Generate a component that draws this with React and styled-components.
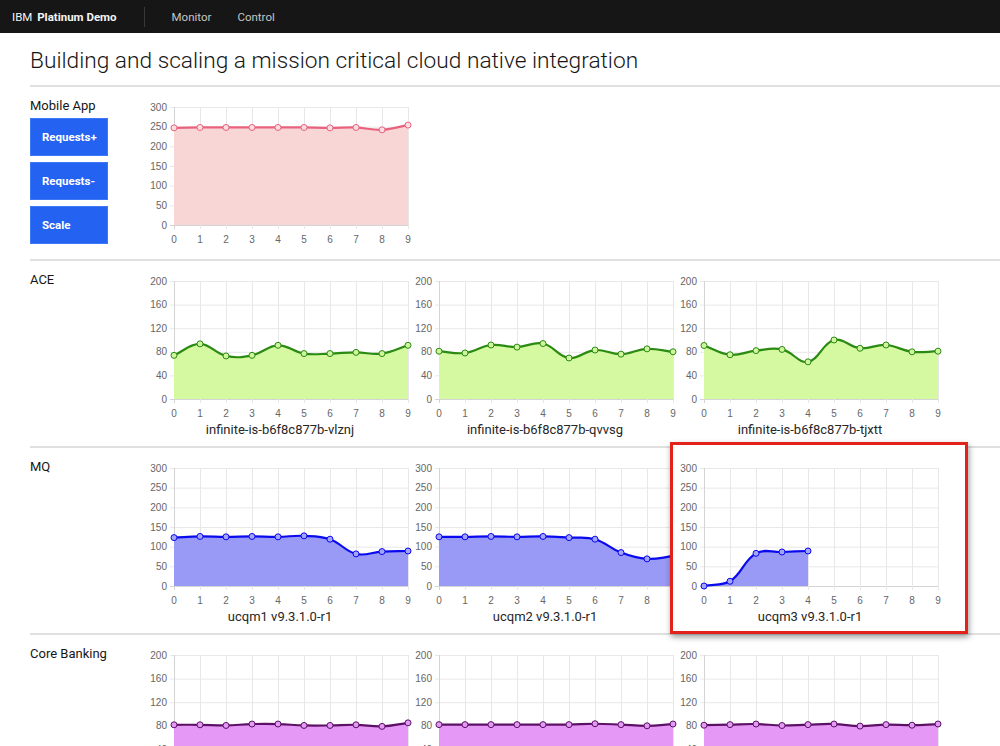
import React from 'react';
import styled, { createGlobalStyle } from 'styled-components';

const GlobalStyle = createGlobalStyle`
    html, body {
        margin: 0;
        padding: 0;
        background: #ffffff;
        overflow: hidden;
    }
    body {
        font-family: Roboto, 'Open Sans', sans-serif;
        color: #161616;
    }
`;

// chart geometry (all charts share it)
const CHART_W = 265;
const PLOT_LEFT = 31;
const PLOT_TOP = 6;
const PLOT_W = 234;
const PLOT_H = 118;
const CHART_H = 146;

const PALETTES = {
    pink: { line: '#e8627e', fill: '#f8d6d6', dot: '#fbdde2' },
    green: { line: '#2a8a12', fill: '#d4f9a0', dot: '#cff69c' },
    blue: { line: '#0a0aee', fill: '#9999f6', dot: '#a3a3f8' },
    purple: { line: '#5c1066', fill: '#e598f6', dot: '#e39af4' },
};

const sections = [
    {
        label: 'Mobile App',
        buttons: ['Requests+', 'Requests-', 'Scale'],
        charts: [
            { palette: 'pink', max: 300, step: 50, data: [247, 248, 248, 248, 248, 248, 247, 248, 242, 254] },
        ],
    },
    {
        label: 'ACE',
        charts: [
            { name: 'infinite-is-b6f8c877b-vlznj', palette: 'green', max: 200, step: 40, data: [74, 93.5, 73, 74, 91, 77, 77, 79, 77, 91] },
            { name: 'infinite-is-b6f8c877b-qvvsg', palette: 'green', max: 200, step: 40, data: [81, 78, 91.5, 88, 94, 69.5, 83, 76, 85, 80] },
            { name: 'infinite-is-b6f8c877b-tjxtt', palette: 'green', max: 200, step: 40, data: [90.7, 75, 82, 84, 63, 100, 86, 91.5, 80, 81] },
        ],
    },
    {
        label: 'MQ',
        charts: [
            { name: 'ucqm1 v9.3.1.0-r1', palette: 'blue', max: 300, step: 50, data: [123, 126, 125, 126, 125, 127.5, 119, 81.6, 87.5, 89] },
            { name: 'ucqm2 v9.3.1.0-r1', palette: 'blue', max: 300, step: 50, data: [125, 125, 126, 125, 126, 123, 119, 85, 69, 76] },
            { name: 'ucqm3 v9.3.1.0-r1', palette: 'blue', max: 300, step: 50, data: [0, 12, 83, 86.5, 89], highlighted: true },
        ],
    },
    {
        label: 'Core Banking',
        charts: [
            { palette: 'purple', max: 200, step: 40, data: [81.7, 81.7, 80.6, 83, 83, 80.6, 80.6, 81.7, 79, 85] },
            { palette: 'purple', max: 200, step: 40, data: [82, 82, 82, 82, 82, 82, 83.5, 82, 80, 83] },
            { palette: 'purple', max: 200, step: 40, data: [81, 82, 83, 80.5, 82, 83, 79.5, 82, 81, 83] },
        ],
    },
];

// Chart.js style cubic spline, tension 0.4
const splinePath = (pts, tension = 0.4) => {
    const clampY = (y) => Math.min(PLOT_TOP + PLOT_H, Math.max(PLOT_TOP, y));
    const cps = pts.map((p, i) => {
        const prev = pts[i - 1] || p;
        const next = pts[i + 1] || p;
        const d01 = Math.hypot(p.x - prev.x, p.y - prev.y);
        const d12 = Math.hypot(next.x - p.x, next.y - p.y);
        let s01 = d01 / (d01 + d12);
        let s12 = d12 / (d01 + d12);
        if (isNaN(s01)) s01 = 0;
        if (isNaN(s12)) s12 = 0;
        const fa = tension * s01;
        const fb = tension * s12;
        return {
            inX: p.x - fa * (next.x - prev.x),
            inY: clampY(p.y - fa * (next.y - prev.y)),
            outX: p.x + fb * (next.x - prev.x),
            outY: clampY(p.y + fb * (next.y - prev.y)),
        };
    });
    let d = `M${pts[0].x},${pts[0].y}`;
    for (let i = 1; i < pts.length; i++) {
        d += ` C${cps[i - 1].outX},${cps[i - 1].outY} ${cps[i].inX},${cps[i].inY} ${pts[i].x},${pts[i].y}`;
    }
    return d;
};

const LineChart = ({ data, max, step, palette }) => {
    const colors = PALETTES[palette];
    const bottom = PLOT_TOP + PLOT_H;
    const xAt = (i) => PLOT_LEFT + (i * PLOT_W) / 9;
    const yAt = (v) => bottom - (v / max) * PLOT_H;
    const ticks = [];
    for (let v = 0; v <= max; v += step) ticks.push(v);
    const pts = data.map((v, i) => ({ x: xAt(i), y: yAt(v) }));
    const line = splinePath(pts);
    const area = `${line} L${pts[pts.length - 1].x},${bottom} L${pts[0].x},${bottom} Z`;

    return (
        <ChartSvg width={CHART_W} height={CHART_H}>
            {ticks.map((v) => (
                <g key={`y${v}`}>
                    <line x1={PLOT_LEFT - 4} x2={PLOT_LEFT + PLOT_W} y1={yAt(v) + 0.5} y2={yAt(v) + 0.5} stroke={v === 0 ? '#d4d4d4' : '#e8e8e8'} />
                    <TickLabel x={PLOT_LEFT - 7} y={yAt(v)} textAnchor="end" dominantBaseline="central">{v}</TickLabel>
                </g>
            ))}
            {Array.from({ length: 10 }, (_, i) => (
                <g key={`x${i}`}>
                    <line x1={xAt(i) + 0.5} x2={xAt(i) + 0.5} y1={PLOT_TOP} y2={bottom + 4} stroke={i === 0 ? '#d4d4d4' : '#e8e8e8'} />
                    <TickLabel x={xAt(i)} y={bottom + 14} textAnchor="middle" dominantBaseline="central">{i}</TickLabel>
                </g>
            ))}
            <path d={area} fill={colors.fill} />
            <path d={line} fill="none" stroke={colors.line} strokeWidth="2.2" />
            {pts.map((p, i) => (
                <circle key={i} cx={p.x} cy={p.y} r="3" fill={colors.dot} stroke={colors.line} strokeWidth="1" />
            ))}
        </ChartSvg>
    );
};

const App = () => {
    return (
        <>
            <GlobalStyle />
            <Header>
                <Brand>
                    IBM <strong>Platinum Demo</strong>
                </Brand>
                <Nav>
                    <NavItem>Monitor</NavItem>
                    <NavItem>Control</NavItem>
                </Nav>
            </Header>

            <Main>
                <Title>Building and scaling a mission critical cloud native integration</Title>

                {sections.map((section) => (
                    <Section key={section.label} $compact={!!section.buttons}>
                        <Side>
                            <SectionLabel>{section.label}</SectionLabel>
                            {section.buttons && (
                                <ButtonStack>
                                    {section.buttons.map((b) => (
                                        <ActionButton key={b}>{b}</ActionButton>
                                    ))}
                                </ButtonStack>
                            )}
                        </Side>
                        <ChartRow>
                            {section.charts.map((chart, i) => (
                                <ChartCard key={i} $highlighted={chart.highlighted}>
                                    <LineChart {...chart} />
                                    {chart.name && <ChartName>{chart.name}</ChartName>}
                                </ChartCard>
                            ))}
                        </ChartRow>
                    </Section>
                ))}
            </Main>
        </>
    );
};

const Header = styled.header`
    height: 33px;
    background: #161616;
    display: flex;
    align-items: center;
    padding-left: 12px;
    font-family: Roboto, 'Open Sans', sans-serif;
    font-size: 11.5px;
`;

const Brand = styled.div`
    color: #f4f4f4;
    padding-right: 27px;
    height: 20px;
    line-height: 20px;
    border-right: 1px solid #393939;

    strong {
        font-weight: 700;
        margin-left: 2px;
    }
`;

const Nav = styled.nav`
    display: flex;
    margin-left: 13px;
`;

const NavItem = styled.a`
    color: #c6c6c6;
    padding: 0 13px;
    &:first-child {
        margin-left: 1px;
    }
`;

const Main = styled.main`
    margin-left: 30px;
`;

const Title = styled.h1`
    margin: 12px 0 10px;
    height: 30px;
    line-height: 31px;
    font-size: 22.7px;
    font-weight: 300;
    color: #161616;
`;

const Section = styled.section`
    display: flex;
    border-top: 2px solid #e0e0e0;
    padding: 10px 0 ${(p) => (p.$compact ? '12px' : '8px')};
`;

const Side = styled.div`
    width: 113px;
    flex-shrink: 0;
`;

const SectionLabel = styled.div`
    margin-top: 1px;
    font-size: 13px;
    line-height: 16px;
    color: #161616;
`;

const ButtonStack = styled.div`
    display: flex;
    flex-direction: column;
    gap: 6.5px;
    margin-top: 4px;
`;

const ActionButton = styled.button`
    width: 78px;
    height: 37.5px;
    background: #2462f2;
    border: 1px solid #3f78f6;
    color: #ffffff;
    font-family: Roboto, 'Open Sans', sans-serif;
    font-size: 11.5px;
    font-weight: 700;
    text-align: left;
    padding: 0 0 0 11px;
    cursor: pointer;
`;

const ChartRow = styled.div`
    display: flex;
`;

const ChartCard = styled.div`
    width: ${CHART_W}px;
    padding-top: 4px;
    position: relative;
    z-index: ${(p) => (p.$highlighted ? 1 : 'auto')};

    ${(p) => p.$highlighted && `
        &::before {
            content: "";
            position: absolute;
            top: -16px;
            left: -3px;
            right: -30px;
            bottom: -9px;
            border: 3px solid #e3221b;
            background: #ffffff;
            box-shadow: 1px 3px 6px rgba(0, 0, 0, 0.4);
            z-index: -1;
        }
    `}
`;

const ChartSvg = styled.svg`
    display: block;
    overflow: visible;
`;

const TickLabel = styled.text`
    font-family: 'Liberation Sans', Arial, sans-serif;
    font-size: 10px;
    fill: #666666;
`;

const ChartName = styled.div`
    padding: 1px 0 0 9px;
    text-align: center;
    font-size: 13px;
    line-height: 16px;
    color: #262626;
`;

export default App;
